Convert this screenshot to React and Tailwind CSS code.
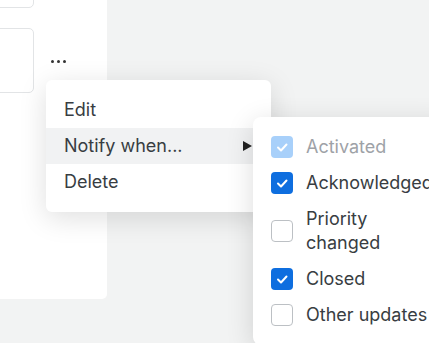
import React from 'react';

const font = { fontFamily: 'Inter, "Noto Sans", sans-serif' };

const options = [
  { label: 'Activated', state: 'disabled' },
  { label: 'Acknowledged', state: 'checked' },
  { label: 'Priority changed', state: 'off' },
  { label: 'Closed', state: 'checked' },
  { label: 'Other updates', state: 'off' },
];

const Check = () => (
  <svg viewBox="0 0 22 22" className="w-[22px] h-[22px]">
    <polyline
      points="7,11.5 10,14.5 15.5,8.5"
      fill="none"
      stroke="#fff"
      strokeWidth="2"
      strokeLinecap="round"
      strokeLinejoin="round"
    />
  </svg>
);

const Checkbox = ({ state }) => {
  if (state === 'off') {
    return <span className="w-[22px] h-[22px] shrink-0 rounded-[4px] border border-[#bcc0c4] bg-white" />;
  }
  return (
    <span
      className={
        state === 'disabled'
          ? 'w-[22px] h-[22px] shrink-0 rounded-[4px] bg-[#a8d0fa]'
          : 'w-[22px] h-[22px] shrink-0 rounded-[4px] bg-[#0e6edf]'
      }
    >
      <Check />
    </span>
  );
};

export default function App() {
  return (
    <div className="relative w-[429px] h-[343px] overflow-hidden bg-[#f2f3f3] text-[#383d42]" style={font}>
      {/* left card */}
      <div className="w-[107px] h-[331px] bg-white rounded-br-[5px]">
        <div className="h-[40px] -mt-[32px] w-[60px] -ml-[26px] rounded-[5px] border border-[#e2e4e6]" />
        <div className="flex items-center gap-[17px] mt-[20px]">
          <div className="h-[65px] w-[60px] -ml-[26px] rounded-[5px] border border-[#e2e4e6]" />
          <div className="flex gap-[3px] mt-[1px]">
            <span className="w-[3px] h-[3px] rounded-full bg-[#333]" />
            <span className="w-[3px] h-[3px] rounded-full bg-[#333]" />
            <span className="w-[3px] h-[3px] rounded-full bg-[#333]" />
          </div>
        </div>
      </div>

      {/* context menu */}
      <div className="absolute left-[46px] top-[80px] w-[225px] py-3 bg-white rounded-[6px] shadow-[0_6px_28px_rgba(0,0,0,0.13)] text-[18px] leading-6">
        <div className="h-9 flex items-center px-[18px]">Edit</div>
        <div className="h-9 flex items-center justify-between pl-[18px] pr-[19px] bg-[#f1f2f3]">
          <span>Notify when...</span>
          <svg viewBox="0 0 9 10" className="w-[9px] h-[10px]">
            <path d="M0 0 L9 5 L0 10 Z" fill="#222" />
          </svg>
        </div>
        <div className="h-9 flex items-center px-[18px]">Delete</div>
      </div>

      {/* submenu */}
      <div className="absolute left-[253px] top-[117px] w-[200px] py-3 pl-[18px] bg-white rounded-[8px] shadow-[0_6px_28px_rgba(0,0,0,0.14)] text-[18px]">
        {options.map((o) => (
          <div key={o.label} className="flex items-center py-1.5">
            <Checkbox state={o.state} />
            <span
              className={
                o.state === 'disabled'
                  ? 'ml-[13px] w-[124px] leading-6 whitespace-normal text-[#9ea2a7]'
                  : 'ml-[13px] w-[124px] leading-6 whitespace-normal'
              }
            >
              {o.label}
            </span>
          </div>
        ))}
      </div>
    </div>
  );
}
